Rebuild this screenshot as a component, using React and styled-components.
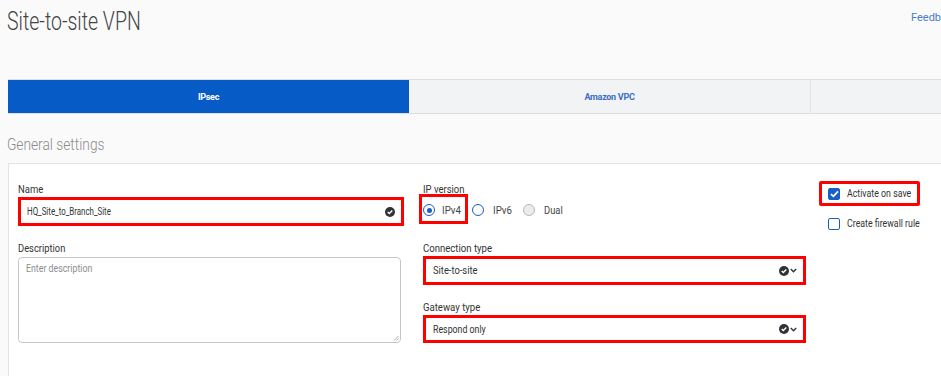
import React from "react";
import styled, { createGlobalStyle } from "styled-components";

const Global = createGlobalStyle`
  html, body {
    margin: 0;
    padding: 0;
    background: #fafafa;
    overflow: hidden;
  }
  body {
    font-family: Roboto, "Liberation Sans", sans-serif;
    color: #333;
  }
`;

const Page = styled.div`
  width: 941px;
  height: 376px;
  overflow: hidden;
`;

const Header = styled.div`
  display: flex;
  justify-content: space-between;
  align-items: flex-start;
  height: 79px;
  padding-left: 7px;
`;

const Title = styled.h1`
  margin: 6px 0 0;
  font-weight: 300;
  font-size: 26px;
  white-space: nowrap;
  transform: scaleX(0.75);
  transform-origin: left;
  color: #444;
`;

const Feedback = styled.a`
  margin-top: 11px;
  width: 30px;
  overflow: hidden;
  white-space: nowrap;
  font-size: 11px;
  color: #4a7cc9;
  text-decoration: none;
`;

const Tabs = styled.div`
  display: grid;
  grid-template-columns: 401px 401px 1fr;
  margin-left: 8px;
  height: 33px;
  border-top: 1px solid #dedede;
  border-bottom: 1px solid #dedede;
  background: #f2f3f5;
`;

const Tab = styled.div`
  display: flex;
  align-items: center;
  justify-content: center;
  font-size: 9px;
  font-weight: 700;
  letter-spacing: -0.3px;
  background: ${(p) => (p.$active ? "#065bc6" : "transparent")};
  color: ${(p) => (p.$active ? "#fff" : "#3b6fc4")};
  border-left: ${(p) => (p.$divider ? "1px solid #e3e3e3" : "none")};
`;

const SectionTitle = styled.h2`
  margin: 0;
  padding: 21px 0 0 8px;
  height: 28px;
  font-size: 16px;
  font-weight: 300;
  white-space: nowrap;
  transform: scaleX(0.86);
  transform-origin: left;
  color: #8a8a8a;
`;

const Card = styled.div`
  margin-left: 8px;
  height: 220px;
  background: #fff;
  border-top: 1px solid #e4e4e4;
  border-left: 1px solid #e4e4e4;
  display: grid;
  grid-template-columns: 386px 383px 1fr;
  column-gap: 19px;
  padding: 19px 0 0 9px;
  box-sizing: border-box;
`;

const Column = styled.div`
  display: flex;
  flex-direction: column;
  margin-left: ${(p) => p.$shift || 0}px;
`;

/* the screenshot's type is narrow, so text is squeezed horizontally */
const Txt = styled.span`
  display: inline-block;
  white-space: nowrap;
  transform: scaleX(${(p) => p.$sx || 0.82});
  transform-origin: left center;
  width: ${(p) => (p.$w ? `${p.$w}px` : "auto")};
`;

const Label = styled.div`
  font-size: 11px;
  line-height: 14px;
  color: #333;
  margin-top: ${(p) => p.$top || 0}px;
`;

const Field = styled.div`
  display: flex;
  align-items: center;
  justify-content: space-between;
  height: ${(p) => p.$h || 29}px;
  box-sizing: border-box;
  border: 3px solid #f00;
  background: #fff;
  padding: 0 6px 0 ${(p) => p.$pad || 6}px;
  font-size: 11px;
  color: #333;
  margin-top: ${(p) => p.$top || 0}px;
`;

const Icons = styled.span`
  display: flex;
  align-items: center;
  gap: 1px;
`;

const TextArea = styled.div`
  margin-top: 1px;
  width: 383px;
  height: 86px;
  box-sizing: border-box;
  border: 1px solid #c6c6c6;
  border-radius: 4px;
  padding: 4px 7px;
  font-size: 11px;
  color: #8e8e8e;
  position: relative;
`;

const Grip = styled.svg`
  position: absolute;
  right: 1px;
  bottom: 1px;
`;

const RadioRow = styled.div`
  display: flex;
  align-items: center;
  margin: -3px 0 0 -4px;
  height: 30px;
`;

const RadioBox = styled.div`
  display: flex;
  align-items: center;
  gap: ${(p) => p.$gap || 7}px;
  height: 30px;
  box-sizing: border-box;
  padding: 2px ${(p) => p.$right || 0}px 0 1px;
  border: 3px solid ${(p) => (p.$mark ? "#f00" : "transparent")};
  border-width: ${(p) => (p.$mark ? "3px" : "3px 0")};
  margin-right: ${(p) => p.$after || 0}px;
  font-size: 11px;
  color: #444;
`;

const Radio = styled.span`
  width: 12px;
  height: 12px;
  box-sizing: border-box;
  border-radius: 50%;
  border: 1.6px solid ${(p) => (p.$off ? "#b8b8b8" : "#1a5fc6")};
  background: ${(p) => (p.$off ? "#ececec" : "#fff")};
  display: flex;
  align-items: center;
  justify-content: center;
  &::after {
    content: "";
    width: 5px;
    height: 5px;
    border-radius: 50%;
    background: ${(p) => (p.$on ? "#1a5fc6" : "transparent")};
  }
`;

const CheckRow = styled.div`
  display: flex;
  align-items: center;
  gap: 7px;
  width: ${(p) => (p.$mark ? "101px" : "auto")};
  height: 25px;
  box-sizing: border-box;
  padding: 0 0 0 6px;
  border: 3px solid ${(p) => (p.$mark ? "#f00" : "transparent")};
  border-radius: 2px;
  margin-top: ${(p) => p.$top || 0}px;
  font-size: 11px;
  color: #333;
`;

const Box = styled.span`
  flex: none;
  width: 12px;
  height: 12px;
  box-sizing: border-box;
  border-radius: 2px;
  border: 1.5px solid #1a5fc6;
  background: ${(p) => (p.$on ? "#1a5fc6" : "#fff")};
  display: flex;
  align-items: center;
  justify-content: center;
`;

const CheckCircle = () => (
  <svg width="10" height="10" viewBox="0 0 10 10">
    <circle cx="5" cy="5" r="5" fill="#2f3338" />
    <path d="M2.7 5.1 L4.3 6.6 L7.3 3.5" stroke="#fff" strokeWidth="1.4" fill="none" />
  </svg>
);

const Chevron = () => (
  <svg width="7" height="5" viewBox="0 0 7 5">
    <path d="M0.8 1 L3.5 3.8 L6.2 1" stroke="#2f3338" strokeWidth="1.4" fill="none" />
  </svg>
);

const Tick = () => (
  <svg width="9" height="8" viewBox="0 0 9 8">
    <path d="M1 4.2 L3.4 6.4 L8 1.4" stroke="#fff" strokeWidth="1.7" fill="none" />
  </svg>
);

const SelectIcons = () => (
  <Icons>
    <CheckCircle />
    <Chevron />
  </Icons>
);

export default function App() {
  return (
    <Page>
      <Global />
      <Header>
        <Title>Site-to-site VPN</Title>
        <Feedback href="#">Feedback</Feedback>
      </Header>
      <Tabs>
        <Tab $active>IPsec</Tab>
        <Tab>Amazon VPC</Tab>
        <Tab $divider />
      </Tabs>
      <SectionTitle>General settings</SectionTitle>
      <Card>
        <Column>
          <Label><Txt $sx={0.86}>Name</Txt></Label>
          <Field $pad={6}>
            <Txt $sx={0.72}>HQ_Site_to_Branch_Site</Txt>
            <CheckCircle />
          </Field>
          <Label $top={16}><Txt $sx={0.85}>Description</Txt></Label>
          <TextArea>
            <Txt $sx={0.8}>Enter description</Txt>
            <Grip width="6" height="6" viewBox="0 0 6 6">
              <path d="M1 5.5 L5.5 1 M3.5 5.5 L5.5 3.5" stroke="#999" strokeWidth="0.8" />
            </Grip>
          </TextArea>
        </Column>
        <Column>
          <Label><Txt $sx={0.86}>IP version</Txt></Label>
          <RadioRow>
            <RadioBox $mark $right={3} $after={3}>
              <Radio $on />
              <Txt $sx={0.88} $w={20}>IPv4</Txt>
            </RadioBox>
            <RadioBox $gap={9} $after={9}>
              <Radio />
              <Txt $sx={0.88} $w={20}>IPv6</Txt>
            </RadioBox>
            <RadioBox $gap={9}>
              <Radio $off />
              <Txt $sx={0.85} $w={20}>Dual</Txt>
            </RadioBox>
          </RadioRow>
          <Label $top={18}><Txt $sx={0.87}>Connection type</Txt></Label>
          <Field $pad={7}>
            <Txt $sx={0.85}>Site-to-site</Txt>
            <SelectIcons />
          </Field>
          <Label $top={16}><Txt $sx={0.87}>Gateway type</Txt></Label>
          <Field $pad={7} $h={28}>
            <Txt $sx={0.8}>Respond only</Txt>
            <SelectIcons />
          </Field>
        </Column>
        <Column $shift={-6}>
          <CheckRow $mark $top={-2}>
            <Box $on>
              <Tick />
            </Box>
            <Txt $sx={0.8}>Activate on save</Txt>
          </CheckRow>
          <CheckRow $top={5}>
            <Box />
            <Txt $sx={0.8}>Create firewall rule</Txt>
          </CheckRow>
        </Column>
      </Card>
    </Page>
  );
}
